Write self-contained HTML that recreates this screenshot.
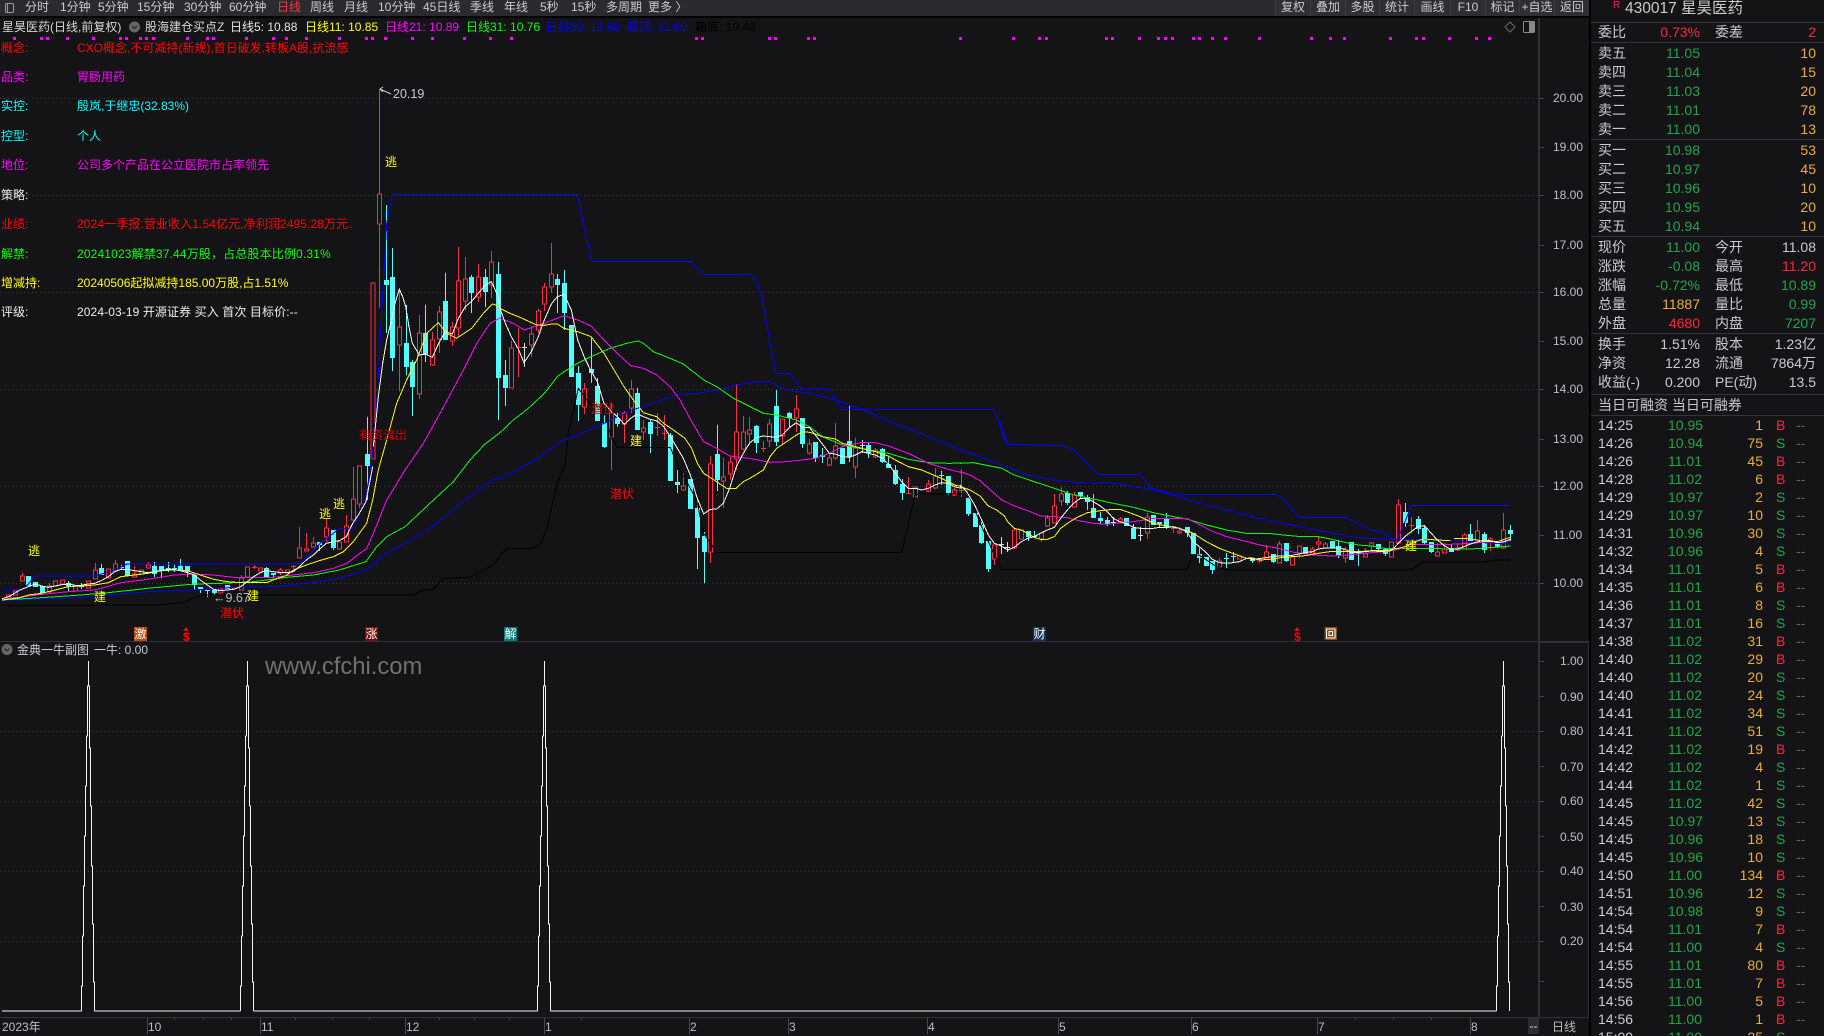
<!DOCTYPE html>
<html lang="zh">
<head>
<meta charset="utf-8">
<title>星昊医药</title>
<style>
html,body{margin:0;padding:0;background:#141416;width:1824px;height:1036px;overflow:hidden}
body{position:relative;font-family:"Liberation Sans","Noto Sans CJK SC",sans-serif;font-size:12px;color:#c8ccd0}
svg.c{position:absolute;left:0;top:0}
svg.c polyline{vector-effect:non-scaling-stroke;fill:none;stroke-width:1;shape-rendering:crispEdges}
.w{stroke:#fff}.y{stroke:#ff0}.m{stroke:#f0f}.g{stroke:#0f0}.b{stroke:#00f}.k{stroke:#000}
.t{position:absolute;white-space:nowrap;line-height:16px;height:16px}
.bar{position:absolute;left:0;top:0;width:1589px;height:16px;background:#2a2b2e;border-bottom:2px solid #000}
.bar .t{top:-1px;color:#c8ccd0}
.btn{position:absolute;top:0;height:16px;background:#2e2f33;border-left:1px solid #3c3d42;text-align:center;line-height:14px;color:#c8ccd0;box-sizing:border-box}
.ax{color:#b8c0c8}
.p{position:absolute;left:1591px;top:0;width:233px;height:1036px;background:#141416;border-left:2px solid #000;box-sizing:border-box;margin-left:-2px}
.ln{position:absolute;left:1591px;width:233px;height:1px;background:#33353c}
.f{font-size:14px;position:absolute;white-space:nowrap;line-height:16px;height:16px}
.l{left:1598px;color:#c8ccd0}.k2{left:1715px;color:#c8ccd0}
.a{right:124px}.v{right:8px}
.gr{color:#1fa54a}.or{color:#e9ad3c}.re{color:#ff2240}.wh{color:#c8ccd0}
.tr{position:absolute;left:1598px;top:416px;width:226px;height:620px;overflow:hidden;font-size:14px;line-height:18px}
.tr div{height:18px;white-space:nowrap}
.tr b,.tr i,.tr u,.tr s,.tr em{display:inline-block;font-weight:normal;font-style:normal;text-decoration:none}
.tr b{width:70px;color:#c8ccd0}.tr i{width:50px;color:#1fa54a}.tr u{width:45px;text-align:right;color:#e9ad3c}
.tr s{width:20px;padding-left:13px;box-sizing:content-box;color:#1fa54a}.tr s.r{color:#ff2240}.tr em{color:#666}
.mk{position:absolute;top:627px;width:13px;height:14px;line-height:14px;text-align:center;color:#fff;font-size:12px;overflow:hidden}
</style>
</head>
<body>
<svg class="c" width="1824" height="1036" viewBox="0 0 1824 1036">
<defs><path id="sp" fill="none" stroke="#f2f2f2" shape-rendering="crispEdges" d="M-7 1011V986H-6V936H-5V886H-4V836H-3V786H-2V736H-1V686H0V661V686H1V748H2V806H3V866H4V924H5V982H6V1011"/></defs>
<!-- grid -->
<path stroke="#3a3a3c" stroke-dasharray="1 3" fill="none" shape-rendering="crispEdges" d="M0 98.5H1539M0 195.5H1539M0 292.5H1539M0 389.5H1539M0 486.5H1539M0 583.5H1539M0 731.5H1539M0 801.5H1539M0 871.5H1539M0 941.5H1539"/>
<!-- magenta squares -->
<path fill="#f0f" d="M13 37h3v3h-3zM40 37h3v3h-3zM46 37h3v3h-3zM66 37h3v3h-3zM92 37h3v3h-3zM119 37h3v3h-3zM125 37h3v3h-3zM139 37h3v3h-3zM145 37h3v3h-3zM152 37h3v3h-3zM186 37h3v3h-3zM206 37h3v3h-3zM212 37h3v3h-3zM245 37h3v3h-3zM272 37h3v3h-3zM285 37h3v3h-3zM305 37h3v3h-3zM338 37h3v3h-3zM365 37h3v3h-3zM371 37h3v3h-3zM384 37h3v3h-3zM411 37h3v3h-3zM431 37h3v3h-3zM463 37h3v3h-3zM489 37h3v3h-3zM510 37h3v3h-3zM695 37h3v3h-3zM701 37h3v3h-3zM768 37h3v3h-3zM774 37h3v3h-3zM807 37h3v3h-3zM813 37h3v3h-3zM959 37h3v3h-3zM1012 37h3v3h-3zM1038 37h3v3h-3zM1045 37h3v3h-3zM1105 37h3v3h-3zM1111 37h3v3h-3zM1138 37h3v3h-3zM1157 37h3v3h-3zM1164 37h3v3h-3zM1171 37h3v3h-3zM1192 37h3v3h-3zM1198 37h3v3h-3zM1211 37h3v3h-3zM1224 37h3v3h-3zM1258 37h3v3h-3zM1310 37h3v3h-3zM1329 37h3v3h-3zM1343 37h3v3h-3zM1389 37h3v3h-3zM1415 37h3v3h-3zM1422 37h3v3h-3zM1448 37h3v3h-3zM1475 37h3v3h-3zM1488 37h3v3h-3z"/>
<!-- cyan wicks -->
<path stroke="#54ffff" fill="none" shape-rendering="crispEdges" d="M68.5 581V591M81.5 583V589M101.5 564V575M121.5 565V570M154.5 562V577M161.5 566V578M168.5 562V572M174.5 565V572M180.5 559V571M187.5 566V577M194.5 575V590M200.5 587V593M207.5 590V597M214.5 590V595M266.5 567V577M273.5 573V578M319.5 542V551M333.5 530V550M367.5 417V500M386.5 205V333M392.5 248V371M406.5 305V375M412.5 360V416M425.5 305V362M445.5 273V340M471.5 275V313M485.5 269V307M498.5 262V420M505.5 360V406M557.5 274V313M564.5 270V330M578.5 366V421M591.5 337V383M597.5 378V421M604.5 415V448M617.5 413V427M637.5 388V430M650.5 420V453M670.5 433V481M677.5 470V493M697.5 497V569M704.5 532V583M717.5 425V491M756.5 425V453M776.5 390V446M789.5 412V428M802.5 418V448M815.5 442V462M822.5 448V463M849.5 406V462M868.5 443V458M882.5 448V463M888.5 457V468M895.5 465V485M902.5 479V500M941.5 471V485M948.5 476V495M968.5 498V516M981.5 522V544M988.5 541V572M1028.5 531V541M1034.5 531V538M1067.5 491V505M1080.5 492V498M1087.5 495V510M1093.5 494V518M1100.5 512V524M1107.5 517V526M1133.5 524V539M1159.5 522V527M1166.5 513V529M1187.5 527V537M1199.5 548V563M1212.5 561V574M1226.5 553V568M1233.5 552V562M1252.5 558V563M1273.5 554V563M1286.5 543V562M1338.5 540V558M1358.5 549V566M1378.5 544V551M1385.5 549V556M1405.5 503V527M1418.5 516V534M1424.5 525V544M1431.5 542V553M1451.5 545V552M1470.5 524V541M1484.5 532V553M1497.5 542V548M1510.5 525V541"/>
<!-- cyan bodies -->
<path fill="#54ffff" shape-rendering="crispEdges" d="M26 576h5V586h-5zM33 582h5V587h-5zM40 586h5V593h-5zM66 583h5V587h-5zM79 586h5v1h-5zM99 568h5V575h-5zM119 567h5v1h-5zM125 561h5V576h-5zM152 566h5V574h-5zM159 566h5V571h-5zM166 568h5v1h-5zM172 568h5v1h-5zM178 566h5V571h-5zM185 566h5V572h-5zM192 575h5V585h-5zM198 587h5V589h-5zM205 590h5V591h-5zM212 590h5V593h-5zM225 585h5V589h-5zM264 568h5V577h-5zM271 573h5V575h-5zM317 542h5V545h-5zM331 530h5V548h-5zM365 454h5V466h-5zM384 280h5V285h-5zM390 277h5V358h-5zM404 343h5V367h-5zM410 362h5V387h-5zM423 333h5V355h-5zM443 301h5V340h-5zM469 277h5V293h-5zM483 277h5V292h-5zM496 274h5V378h-5zM503 375h5V388h-5zM555 279h5V285h-5zM562 283h5V313h-5zM569 325h5V377h-5zM576 373h5V405h-5zM589 369h5V373h-5zM595 386h5V421h-5zM602 423h5V447h-5zM615 418h5V424h-5zM635 393h5V430h-5zM648 422h5V434h-5zM668 435h5V481h-5zM675 482h5V485h-5zM688 479h5V509h-5zM695 508h5V538h-5zM702 536h5V552h-5zM715 454h5V480h-5zM754 426h5V443h-5zM774 406h5V442h-5zM787 413h5V418h-5zM800 418h5V444h-5zM813 442h5V458h-5zM820 455h5V457h-5zM840 448h5V464h-5zM847 441h5V457h-5zM866 445h5V453h-5zM880 449h5V462h-5zM886 464h5V468h-5zM893 470h5V484h-5zM900 484h5V493h-5zM939 475h5v1h-5zM946 476h5V493h-5zM966 498h5V514h-5zM973 513h5V527h-5zM979 525h5V543h-5zM986 541h5V569h-5zM1026 531h5V537h-5zM1032 536h5v1h-5zM1065 493h5V503h-5zM1078 492h5V496h-5zM1085 497h5V502h-5zM1091 508h5V518h-5zM1098 518h5V521h-5zM1105 520h5V524h-5zM1124 518h5V526h-5zM1131 528h5V539h-5zM1151 515h5V525h-5zM1157 522h5V524h-5zM1164 518h5V528h-5zM1185 527h5V533h-5zM1191 533h5V554h-5zM1197 554h5V558h-5zM1204 557h5V566h-5zM1210 561h5V570h-5zM1224 558h5v1h-5zM1231 556h5v1h-5zM1250 558h5V561h-5zM1271 554h5V562h-5zM1284 543h5V561h-5zM1303 547h5V554h-5zM1330 541h5V548h-5zM1336 546h5V555h-5zM1349 542h5V560h-5zM1356 552h5V554h-5zM1376 544h5V549h-5zM1383 549h5V554h-5zM1403 512h5V523h-5zM1416 519h5V529h-5zM1422 528h5V543h-5zM1429 542h5V552h-5zM1449 548h5V552h-5zM1468 534h5V541h-5zM1482 534h5V550h-5zM1495 542h5V547h-5zM1508 530h5V534h-5z"/>
<!-- white dojis -->
<path stroke="#ddd" fill="none" shape-rendering="crispEdges" d="M524.5 343V367M522 347.5h5M862.5 440V453M860 445.5h5M1001.5 537V554M999 544.5h5M1007.5 542V552M1005 547.5h5M1113.5 517V526M1111 522.5h5M1140.5 527V541M1138 535.5h5"/>
<!-- red wicks -->
<path stroke="#ff2d45" fill="none" shape-rendering="crispEdges" d="M22.5 573V581M49.5 583V593M95.5 563V579M115.5 560V571M134.5 566V577M148.5 562V568M232 588.5h5M241.5 575V590M254.5 565V569M252 567.5h5M280.5 568V575M293.5 565V569M291 566.5h5M299.5 527V558M306.5 533V551M313.5 537V547M326.5 519V542M346.5 515V542M353.5 467V520M359.5 466V508M379.5 89V308M399.5 290V391M419.5 315V399M432.5 332V366M439.5 306V353M452.5 322V346M458.5 247V337M465.5 257V310M478.5 264V302M491.5 251V298M511.5 341V388M518.5 328V377M516 347.5h5M531.5 326V357M538.5 309V333M544.5 283V311M551.5 243V293M584.5 383V414M611.5 403V470M624.5 411V443M631.5 380V413M643.5 420V440M657.5 413V436M655 427.5h5M664.5 415V440M662 433.5h5M683.5 473V491M710.5 456V563M723.5 458V508M730.5 457V480M736.5 384V470M743.5 416V450M749.5 417V445M763.5 441V452M761 448.5h5M769.5 419V447M782.5 419V444M796.5 395V432M809.5 439V455M829.5 453V466M835.5 423V460M855.5 438V478M875.5 448V458M908.5 477V494M906 493.5h5M928.5 480V492M935.5 468V489M954.5 488V496M961.5 469V497M959 490.5h5M994.5 545V565M1014.5 528V549M1041.5 533V542M1047.5 515V527M1054.5 494V524M1061.5 487V506M1074.5 492V507M1120.5 517V523M1147.5 513V539M1173.5 526V533M1171 528.5h5M1179.5 527V534M1219.5 558V568M1259.5 559V563M1266.5 545V560M1279.5 541V563M1299.5 546V558M1312.5 547V553M1318.5 537V549M1325.5 542V549M1345.5 547V563M1365.5 548V557M1371.5 542V550M1398.5 499V544M1411.5 517V533M1409 525.5h5M1437.5 543V556M1444.5 543V553M1457.5 543V551M1464.5 533V549M1477.5 520V542M1490.5 537V551M1503.5 513V549"/>
<!-- red bodies -->
<path stroke="#ff2d45" fill="#141416" shape-rendering="crispEdges" d="M6.5 595h4V598h-4zM13.5 591h4V595h-4zM20.5 576h4V581h-4zM47.5 586h4V592h-4zM53.5 581h4V586h-4zM60.5 580h4V584h-4zM73.5 586h4V591h-4zM86.5 581h4V588h-4zM93.5 570h4V579h-4zM106.5 569h4V578h-4zM113.5 564h4V571h-4zM132.5 574h4V577h-4zM139.5 570h4V574h-4zM146.5 565h4V568h-4zM218.5 589h4V593h-4zM239.5 578h4V590h-4zM245.5 567h4V577h-4zM258.5 568h4V571h-4zM278.5 570h4V573h-4zM285.5 570h4V573h-4zM297.5 548h4V558h-4zM304.5 549h4V551h-4zM311.5 543h4V547h-4zM324.5 528h4V537h-4zM337.5 542h4V549h-4zM344.5 526h4V542h-4zM351.5 499h4V520h-4zM357.5 466h4V504h-4zM371 283h4V459h-4zM377.5 194h4V224h-4zM397.5 327h4V345h-4zM417.5 333h4V394h-4zM430.5 340h4V365h-4zM437.5 312h4V339h-4zM450.5 327h4V341h-4zM456.5 281h4V328h-4zM463.5 279h4V301h-4zM476.5 277h4V297h-4zM489.5 262h4V285h-4zM509.5 348h4V388h-4zM529.5 334h4V345h-4zM536.5 311h4V330h-4zM542.5 287h4V304h-4zM549.5 274h4V287h-4zM582.5 389h4V407h-4zM609.5 413h4V437h-4zM622.5 413h4V424h-4zM629.5 389h4V408h-4zM641.5 428h4V432h-4zM681.5 486h4V490h-4zM708.5 464h4V552h-4zM721.5 477h4V481h-4zM728.5 462h4V474h-4zM734.5 432h4V459h-4zM741.5 432h4V449h-4zM747.5 430h4V434h-4zM767.5 424h4V441h-4zM780.5 419h4V436h-4zM794.5 409h4V418h-4zM807.5 444h4V453h-4zM827.5 458h4V465h-4zM833.5 446h4V458h-4zM853.5 448h4V467h-4zM873.5 450h4V457h-4zM913.5 487h4V497h-4zM926.5 484h4V491h-4zM933.5 476h4V488h-4zM952.5 490h4V495h-4zM992.5 545h4V559h-4zM1012.5 530h4V548h-4zM1019.5 530h4V539h-4zM1039.5 533h4V539h-4zM1045.5 518h4V526h-4zM1052.5 506h4V523h-4zM1059.5 494h4V501h-4zM1072.5 495h4V507h-4zM1118.5 519h4V523h-4zM1145.5 517h4V533h-4zM1177.5 531h4V533h-4zM1217.5 561h4V567h-4zM1237.5 556h4V559h-4zM1257.5 559h4V561h-4zM1264.5 552h4V559h-4zM1277.5 544h4V563h-4zM1290.5 557h4V565h-4zM1297.5 546h4V553h-4zM1310.5 549h4V553h-4zM1316.5 542h4V544h-4zM1323.5 544h4V548h-4zM1343.5 550h4V558h-4zM1363.5 554h4V557h-4zM1369.5 543h4V546h-4zM1389.5 542h4V557h-4zM1396.5 505h4V543h-4zM1435.5 552h4V556h-4zM1442.5 549h4V553h-4zM1455.5 548h4V550h-4zM1462.5 535h4V549h-4zM1475.5 531h4V542h-4zM1488.5 539h4V542h-4zM1501.5 530h4V548h-4z"/>
<!-- lines: zone 1 -->
<g transform="translate(0,300) scale(.33333)">
<polyline class="k" points="6,917 470,915 550,908 580,895 610,885 1240,885 1270,870 1300,868 1330,835 1410,832 1480,795 1500,770"/>
<polyline class="b" points="6,902 125,897 243,893 363,882 443,875 583,870 701,862 820,860 940,848 1018,835 1098,810 1160,760 1250,710 1295,680 1360,630 1420,580 1480,540 1500,532"/>
<polyline class="b" points="6,870 70,870 105,828 284,828 345,810 380,792 898,792 960,730 1000,700 1018,685 1060,685 1098,590 1118,460 1130,320"/>
<polyline class="g" points="6,900 125,893 243,885 325,878 443,865 583,852 661,850 761,845 860,832 940,825 1018,810 1098,785 1130,740 1160,710 1215,680 1295,605 1360,545 1410,480 1455,432 1500,398"/>
<polyline class="m" points="6,895 60,892 125,883 205,875 284,870 363,848 443,838 522,825 583,822 641,825 701,832 761,832 820,832 880,825 940,818 1000,805 1040,790 1100,745 1120,700 1160,600 1215,510 1270,430 1320,340 1390,210 1430,130 1470,70 1500,54"/>
<polyline class="y" points="6,900 60,893 85,885 125,880 166,870 205,860 243,858 284,855 325,848 363,830 403,825 443,820 484,812 522,810 562,812 601,825 641,838 682,845 722,848 761,848 799,848 820,840 860,826 880,810 919,795 958,782 1000,770 1030,755 1060,725 1100,670 1118,600 1135,510 1160,420 1190,310 1220,240 1250,180 1280,100 1315,68 1340,100 1370,115 1415,85 1450,40 1478,12 1500,20"/>
<polyline class="w" points="6,897 30,888 60,870 85,860 106,852 125,858 146,862 166,858 185,854 205,852 226,856 243,856 265,852 284,850 304,842 325,830 344,815 363,808 382,808 403,812 424,815 443,818 463,815 484,812 503,808 522,808 541,812 562,818 583,825 601,840 622,855 641,868 661,872 682,870 701,868 722,860 742,845 761,830 781,818 799,812 820,815 841,818 860,818 880,815 898,800 919,780 940,765 958,748 979,730 1000,725 1018,722 1039,710 1058,670 1078,640 1098,605 1118,500"/>
</g>
<g transform="translate(340,80) scale(.33333)">
<polyline class="b" points="100,1100 110,980 125,700 135,520 140,430 157,343 712,343 740,480"/>
<polyline class="w" points="100,1100 115,950 128,850 140,780 155,720 165,670 178,628 188,650 197,680 207,740 217,790 238,825 256,822 277,832 296,790 316,755 337,762 355,715 376,680 394,665 415,640 436,615 454,605 475,650 480,685"/>
</g>
<g transform="translate(500,240) scale(.33333)">
<polyline class="k" points="0,945 25,925 100,925 120,912 140,870 155,800 172,730 195,675 205,580 225,490 235,445 268,490 310,505 333,590 352,622 511,622 535,680 590,780 611,880 650,937 1205,937 1246,762 1405,762 1445,860 1503,988 1560,988"/>
<polyline class="b" points="262,0 275,65 572,65 611,103 750,103 770,120 785,170 800,250 812,320 829,400 868,400 905,447 988,447 1027,508 1482,508 1520,612 1560,612"/>
<polyline class="b" points="0,718 60,685 115,655 180,605 233,585 292,560 352,530 412,505 470,485 530,465 590,460 650,452 710,435 760,427 808,425 860,450 928,460 1006,480 1090,510 1186,552 1285,590 1385,630"/>
<polyline class="g" points="0,578 40,540 85,505 133,460 172,410 192,395 233,370 273,350 330,325 380,310 415,303 430,310 460,335 510,355 550,372 611,420 650,440 700,475 750,500 790,520 829,525 889,540 928,560 967,590 1027,615 1105,630 1165,640 1225,658 1285,668 1345,670 1385,669"/>
<polyline class="m" points="0,235 40,250 72,270 133,250 192,227 233,240 273,258 312,300 352,340 392,377 430,385 470,405 510,440 540,480 575,545 611,605 650,625 689,648 748,655 808,667 860,665 907,660 946,655 988,640 1027,620 1086,607 1126,608 1165,618 1225,640 1285,670 1345,688 1385,698"/>
<polyline class="y" points="0,205 30,220 60,232 110,255 133,256 154,252 172,252 192,265 233,275 273,290 312,340 345,395 372,440 400,480 430,518 470,530 491,550 530,577 555,595 575,625 592,670 611,700 650,725 680,745 708,745 730,725 755,712 790,690 810,650 830,625 860,605 889,585 907,575 928,577 946,582 967,590 1006,597 1027,610 1048,615 1086,625 1126,635 1165,648 1186,660 1225,680 1265,690 1324,715 1364,735 1385,740"/>
<polyline class="w" points="0,205 16,250 34,290 54,325 72,368 94,335 115,290 133,240 154,192 172,170 192,163 214,210 233,300 253,352 274,395 292,425 312,490 332,512 352,530 373,553 392,535 412,522 430,530 451,538 472,543 491,560 511,590 532,625 550,655 571,705 590,770 611,822 631,808 650,807 670,790 689,745 709,680 730,640 748,610 769,593 790,588 808,590 829,592 847,585 868,563 889,548 907,562 928,562 946,585 967,612 988,640 1006,642 1027,650 1048,652 1066,645 1086,635 1105,640 1126,645 1147,655 1165,672 1186,700 1205,725 1225,745 1246,745 1265,750 1285,745 1305,735 1324,728 1345,730 1363,740 1384,745"/>
</g>
<g transform="translate(960,420) scale(.33333)">
<polyline class="b" points="118,0 143,73 170,73 305,77 340,90 380,130 415,163 540,163 575,205 640,223 900,223"/>
<polyline class="b" points="0,90 60,110 125,135 203,165 283,180 341,187 400,190 442,187 500,197 580,210 640,225 720,250 800,270 880,290"/>
<polyline class="g" points="0,130 40,128 125,145 163,165 222,185 283,205 341,225 400,237 460,250 520,262 580,278 640,290 680,297 740,315 800,330 860,340 880,340"/>
<polyline class="m" points="0,155 30,165 60,182 85,205 125,240 163,258 203,272 241,288 280,290 322,293 361,303 400,310 442,313 480,308 520,305 580,295 640,295 680,295 720,315 760,335 800,350 860,365 880,369"/>
<polyline class="y" points="0,200 30,210 60,228 85,258 110,270 133,288 143,305 163,325 184,330 203,340 222,352 241,358 262,358 283,350 302,325 322,310 350,293 382,278 421,272 460,268 480,268 500,275 540,290 580,310 619,318 658,325 700,340 739,365 778,385 818,400 860,415 880,417"/>
<polyline class="w" points="0,195 20,215 44,255 65,300 85,345 103,370 124,378 143,390 163,382 184,365 203,355 222,350 241,340 262,330 283,322 302,295 322,270 341,250 361,235 382,235 400,245 421,258 442,275 460,295 479,305 498,310 520,322 540,325 560,325 580,325 598,322 619,322 639,320 658,325 680,335 700,365 718,380 739,398 757,418 778,428 799,430 818,428 838,425 860,415 880,414"/>
</g>
<polyline class="k" points="1020,569.5 1187,569.5 1193,556 1199,555 1214,565 1226,570 1411,570 1423,562 1482,562 1495,560 1510,560"/>
<g transform="translate(1250,480) scale(.33333)">
<polyline class="b" points="0,43 75,43 100,55 145,112 285,112 320,130 360,150 395,155 425,175 440,180 455,150 484,77 780,77"/>
<polyline class="b" points="0,110 100,130 200,150 300,170 400,178 530,178 620,183 700,188 781,192"/>
<polyline class="g" points="0,160 55,160 100,165 155,170 205,170 245,178 285,187 325,195 364,198 404,205 445,205 523,205 602,207 661,207 721,203 781,198"/>
<polyline class="m" points="0,188 40,197 85,205 127,216 166,222 205,226 245,228 285,226 325,222 364,218 404,215 445,208 484,195 523,193 602,193 661,190 721,185 781,182"/>
<polyline class="y" points="0,233 30,240 60,238 100,232 127,230 166,227 205,220 245,214 285,214 325,215 364,212 404,212 445,205 464,200 484,190 503,182 523,177 560,180 602,182"/>
<polyline class="y" points="612,175 650,176 682,180 700,185 742,185 781,172"/>
<polyline class="w" points="0,238 28,236 47,233 67,230 88,228 107,228 127,226 146,222 166,218 187,215 205,207 226,204 245,204 265,204 286,208 304,218 325,217 344,215 364,213 385,214 404,214 424,212 445,190 464,170 484,155 503,140 523,137 544,160 562,180 583,197 602,208 622,207 642,200 661,192 682,186 703,180 721,182 742,188 760,186 781,178"/>
</g>
<!-- high arrow -->
<path d="M380 89l11 5M380 89l3-2M380 89l3 3" stroke="#ccc" fill="none"/>
<!-- separators -->
<path stroke="#2f3138" fill="none" shape-rendering="crispEdges" d="M0 641.5H1539M0 1017.5H1589"/>
<path stroke="#2f3138" stroke-width="2" fill="none" shape-rendering="crispEdges" d="M1539 18V1018M1539 642H1589V1018"/>
<!-- axis ticks -->
<path stroke="#444850" fill="none" shape-rendering="crispEdges" d="M1540 98.5h4M1540 147.5h4M1540 195.5h4M1540 245.5h4M1540 292.5h4M1540 341.5h4M1540 389.5h4M1540 439.5h4M1540 486.5h4M1540 535.5h4M1540 583.5h4M1540 661.5h4M1540 696.5h4M1540 731.5h4M1540 766.5h4M1540 801.5h4M1540 836.5h4M1540 871.5h4M1540 906.5h4M1540 941.5h4M1540 981.5h4M147.5 1018v16M260.5 1018v16M405.5 1018v16M544.5 1018v16M689.5 1018v16M788.5 1018v16M927.5 1018v16M1058.5 1018v16M1191.5 1018v16M1317.5 1018v16M1470.5 1018v16M174.5 1018v2M203.5 1018v2M231.5 1018v2M295.5 1018v2M332.5 1018v2M369.5 1018v2M439.5 1018v2M474.5 1018v2M509.5 1018v2M581.5 1018v2M1355.5 1018v2M1393.5 1018v2M1431.5 1018v2"/>
<!-- sub chart -->
<path fill="none" stroke="#f2f2f2" shape-rendering="crispEdges" d="M2 1011H81.5M94.5 1011H240.5M253.5 1011H537.5M550.5 1011H1496.5"/>
<use href="#sp" x="88.5"/><use href="#sp" x="247.5"/><use href="#sp" x="544.5"/><use href="#sp" x="1503.5"/>
<!-- misc icons -->
<circle cx="134.5" cy="27" r="5.5" fill="#666"/><path d="M132 26l2.5 2.5 2.5-2.5" stroke="#222" fill="none"/>
<circle cx="7" cy="649.5" r="5.5" fill="#666"/><path d="M4.5 648.5l2.5 2.5 2.5-2.5" stroke="#222" fill="none"/>
<path d="M1510 22l5 5-5 5-5-5z" fill="none" stroke="#6c6c6c"/>
<rect x="1523.5" y="21.5" width="11" height="11" rx="1" fill="none" stroke="#888"/><rect x="1529" y="22" width="5" height="10" fill="#888"/>
<!-- $ marks -->
<path d="M186 627l3 4h-6zM1297 627l3 4h-6z" fill="#f00"/>
<!-- rect icon -->
<rect x="1324.5" y="627" width="12.5" height="13" fill="#8a4a10"/><rect x="1326.5" y="629" width="8.5" height="9" fill="none" stroke="#fff"/><rect x="1329" y="631.5" width="3.5" height="4" fill="none" stroke="#fff"/>
</svg>

<div class="bar">
<svg width="16" height="16" style="position:absolute;left:2px;top:0"><rect x="3.5" y="3.5" width="8" height="9" rx="1" fill="none" stroke="#999"/><path d="M5.5 4v8" stroke="#999"/></svg>
<span class="t" style="left:25px">分时</span><span class="t" style="left:60px">1分钟</span><span class="t" style="left:98px">5分钟</span><span class="t" style="left:137px">15分钟</span><span class="t" style="left:184px">30分钟</span><span class="t" style="left:229px">60分钟</span><span class="t" style="left:277px;color:#ff3344">日线</span><span class="t" style="left:310px">周线</span><span class="t" style="left:344px">月线</span><span class="t" style="left:378px">10分钟</span><span class="t" style="left:423px">45日线</span><span class="t" style="left:470px">季线</span><span class="t" style="left:504px">年线</span><span class="t" style="left:540px">5秒</span><span class="t" style="left:571px">15秒</span><span class="t" style="left:606px">多周期</span><span class="t" style="left:648px">更多 〉</span>
<span class="btn" style="left:1275px;width:35px">复权</span><span class="btn" style="left:1310px;width:35px">叠加</span><span class="btn" style="left:1345px;width:34px">多股</span><span class="btn" style="left:1379px;width:35px">统计</span><span class="btn" style="left:1414px;width:36px">画线</span><span class="btn" style="left:1450px;width:35px">F10</span><span class="btn" style="left:1485px;width:34px">标记</span><span class="btn" style="left:1519px;width:35px">+自选</span><span class="btn" style="left:1554px;width:35px">返回</span>
</div>

<span class="t" style="left:2px;top:19px;color:#d8d8d8">星昊医药(日线,前复权)</span>
<span class="t" style="left:145px;top:19px;color:#d8d8d8">股海建仓买点Z</span>
<span class="t" style="left:230px;top:19px;color:#e8e8e8">日线5: 10.88</span>
<span class="t" style="left:305px;top:19px;color:#ff0">日线11: 10.85</span>
<span class="t" style="left:385px;top:19px;color:#f0f">日线21: 10.89</span>
<span class="t" style="left:466px;top:19px;color:#0f0">日线31: 10.76</span>
<span class="t" style="left:546px;top:19px;color:#00f">日线60: 10.80</span>
<span class="t" style="left:627px;top:19px;color:#00f">箱顶: 11.60</span>
<span class="t" style="left:695px;top:19px;color:#000">箱底: 10.46</span>

<span class="t" style="left:1px;top:40px;color:#f00">概念:</span><span class="t" style="left:77px;top:40px;color:#f00">CXO概念,不可减持(新规),首日破发,转板A股,抗流感</span>
<span class="t" style="left:1px;top:69px;color:#f0f">品类:</span><span class="t" style="left:77px;top:69px;color:#f0f">胃肠用药</span>
<span class="t" style="left:1px;top:98px;color:#0ff">实控:</span><span class="t" style="left:77px;top:98px;color:#0ff">殷岚,于继忠(32.83%)</span>
<span class="t" style="left:1px;top:128px;color:#0ff">控型:</span><span class="t" style="left:77px;top:128px;color:#0ff">个人</span>
<span class="t" style="left:1px;top:157px;color:#f0f">地位:</span><span class="t" style="left:77px;top:157px;color:#f0f">公司多个产品在公立医院市占率领先</span>
<span class="t" style="left:1px;top:187px;color:#eee">策略:</span>
<span class="t" style="left:1px;top:216px;color:#f00">业绩:</span><span class="t" style="left:77px;top:216px;color:#f00;letter-spacing:.1px">2024一季报:营业收入1.54亿元,净利润2495.28万元.</span>
<span class="t" style="left:1px;top:246px;color:#0f0">解禁:</span><span class="t" style="left:77px;top:246px;color:#0f0;letter-spacing:.15px">20241023解禁37.44万股，占总股本比例0.31%</span>
<span class="t" style="left:1px;top:275px;color:#ff0">增减持:</span><span class="t" style="left:77px;top:275px;color:#ff0">20240506起拟减持185.00万股,占1.51%</span>
<span class="t" style="left:1px;top:304px;color:#eee">评级:</span><span class="t" style="left:77px;top:304px;color:#eee;letter-spacing:.1px">2024-03-19 开源证券 买入 首次 目标价:--</span>

<span class="t" style="left:393px;top:86px;color:#c8ccd0;font-size:12.5px">20.19</span>
<span class="t" style="left:385px;top:154px;color:#ff0">逃</span>
<span class="t" style="left:28px;top:543px;color:#ff0">逃</span>
<span class="t" style="left:319px;top:506px;color:#ff0">逃</span>
<span class="t" style="left:333px;top:496px;color:#ff0">逃</span>
<span class="t" style="left:94px;top:589px;color:#ff0">建</span>
<span class="t" style="left:247px;top:588px;color:#ff0">建</span>
<span class="t" style="left:630px;top:433px;color:#ff0">建</span>
<span class="t" style="left:1405px;top:538px;color:#ff0">建</span>
<span class="t" style="left:220px;top:605px;color:#f00">潜伏</span>
<span class="t" style="left:610px;top:486px;color:#f00">潜伏</span>
<span class="t" style="left:591px;top:401px;color:#d00">潜伏</span>
<span class="t" style="left:359px;top:427px;color:#c00">有资流出</span>
<span class="t" style="left:213px;top:590px;color:#bbb;font-size:12.5px">←9.67</span>

<div class="mk" style="left:134px;background:#b84a10">激</div>
<div class="mk" style="left:365px;background:#7a0a0a">涨</div>
<div class="mk" style="left:504px;background:#087a78">解</div>
<div class="mk" style="left:1033px;background:#10355c">财</div>
<span class="t" style="left:183px;top:629px;color:#f00;font-weight:bold;font-size:12px">$</span>
<span class="t" style="left:1294px;top:629px;color:#f00;font-weight:bold;font-size:12px">$</span>

<span class="t" style="left:17px;top:642px;color:#c8ccd0">金典一牛副图</span>
<span class="t" style="left:94px;top:642px;color:#c8ccd0">一牛: 0.00</span>
<span class="t" style="left:265px;top:654px;height:26px;line-height:26px;font-size:23.8px;color:#707070">www.cfchi.com</span>

<!-- axis labels -->
<span class="t ax" style="left:1553px;top:90px">20.00</span><span class="t ax" style="left:1553px;top:139px">19.00</span><span class="t ax" style="left:1553px;top:187px">18.00</span><span class="t ax" style="left:1553px;top:237px">17.00</span><span class="t ax" style="left:1553px;top:284px">16.00</span><span class="t ax" style="left:1553px;top:333px">15.00</span><span class="t ax" style="left:1553px;top:381px">14.00</span><span class="t ax" style="left:1553px;top:431px">13.00</span><span class="t ax" style="left:1553px;top:478px">12.00</span><span class="t ax" style="left:1553px;top:527px">11.00</span><span class="t ax" style="left:1553px;top:575px">10.00</span>
<span class="t ax" style="left:1560px;top:653px">1.00</span><span class="t ax" style="left:1560px;top:689px">0.90</span><span class="t ax" style="left:1560px;top:723px">0.80</span><span class="t ax" style="left:1560px;top:759px">0.70</span><span class="t ax" style="left:1560px;top:793px">0.60</span><span class="t ax" style="left:1560px;top:829px">0.50</span><span class="t ax" style="left:1560px;top:863px">0.40</span><span class="t ax" style="left:1560px;top:899px">0.30</span><span class="t ax" style="left:1560px;top:933px">0.20</span>
<span class="t ax" style="left:2px;top:1019px">2023年</span><span class="t ax" style="left:148px;top:1019px">10</span><span class="t ax" style="left:261px;top:1019px">11</span><span class="t ax" style="left:406px;top:1019px">12</span><span class="t ax" style="left:545px;top:1019px">1</span><span class="t ax" style="left:690px;top:1019px">2</span><span class="t ax" style="left:789px;top:1019px">3</span><span class="t ax" style="left:928px;top:1019px">4</span><span class="t ax" style="left:1059px;top:1019px">5</span><span class="t ax" style="left:1192px;top:1019px">6</span><span class="t ax" style="left:1318px;top:1019px">7</span><span class="t ax" style="left:1471px;top:1019px">8</span>
<span class="t" style="left:1528px;top:1018px;width:11px;height:16px;background:#2c2e36;text-align:center;color:#ddd">--</span>
<span class="t" style="left:1552px;top:1019px;color:#bbb">日线</span>

<!-- right panel -->
<div class="p"></div>
<span class="t" style="left:1613px;top:-2px;color:#ff2240;font-size:10px">R</span>
<span class="t" style="left:1625px;top:1px;font-size:15.5px;color:#ccc">430017 星昊医药</span>
<div class="ln" style="top:22px"></div><div class="ln" style="top:42px"></div><div class="ln" style="top:139px"></div><div class="ln" style="top:236px"></div><div class="ln" style="top:333px"></div><div class="ln" style="top:394px"></div><div class="ln" style="top:415px"></div>

<span class="f l" style="top:24px">委比</span><span class="f a re" style="top:24px">0.73%</span><span class="f k2" style="top:24px">委差</span><span class="f v re" style="top:24px">2</span>

<span class="f l" style="top:45px">卖五</span><span class="f a gr" style="top:45px">11.05</span><span class="f v or" style="top:45px">10</span>
<span class="f l" style="top:64px">卖四</span><span class="f a gr" style="top:64px">11.04</span><span class="f v or" style="top:64px">15</span>
<span class="f l" style="top:83px">卖三</span><span class="f a gr" style="top:83px">11.03</span><span class="f v or" style="top:83px">20</span>
<span class="f l" style="top:102px">卖二</span><span class="f a gr" style="top:102px">11.01</span><span class="f v or" style="top:102px">78</span>
<span class="f l" style="top:121px">卖一</span><span class="f a gr" style="top:121px">11.00</span><span class="f v or" style="top:121px">13</span>

<span class="f l" style="top:142px">买一</span><span class="f a gr" style="top:142px">10.98</span><span class="f v or" style="top:142px">53</span>
<span class="f l" style="top:161px">买二</span><span class="f a gr" style="top:161px">10.97</span><span class="f v or" style="top:161px">45</span>
<span class="f l" style="top:180px">买三</span><span class="f a gr" style="top:180px">10.96</span><span class="f v or" style="top:180px">10</span>
<span class="f l" style="top:199px">买四</span><span class="f a gr" style="top:199px">10.95</span><span class="f v or" style="top:199px">20</span>
<span class="f l" style="top:218px">买五</span><span class="f a gr" style="top:218px">10.94</span><span class="f v or" style="top:218px">10</span>

<span class="f l" style="top:239px">现价</span><span class="f a gr" style="top:239px">11.00</span><span class="f k2" style="top:239px">今开</span><span class="f v wh" style="top:239px">11.08</span>
<span class="f l" style="top:258px">涨跌</span><span class="f a gr" style="top:258px">-0.08</span><span class="f k2" style="top:258px">最高</span><span class="f v re" style="top:258px">11.20</span>
<span class="f l" style="top:277px">涨幅</span><span class="f a gr" style="top:277px">-0.72%</span><span class="f k2" style="top:277px">最低</span><span class="f v gr" style="top:277px">10.89</span>
<span class="f l" style="top:296px">总量</span><span class="f a or" style="top:296px">11887</span><span class="f k2" style="top:296px">量比</span><span class="f v gr" style="top:296px">0.99</span>
<span class="f l" style="top:315px">外盘</span><span class="f a re" style="top:315px">4680</span><span class="f k2" style="top:315px">内盘</span><span class="f v gr" style="top:315px">7207</span>

<span class="f l" style="top:336px">换手</span><span class="f a wh" style="top:336px">1.51%</span><span class="f k2" style="top:336px">股本</span><span class="f v wh" style="top:336px">1.23亿</span>
<span class="f l" style="top:355px">净资</span><span class="f a wh" style="top:355px">12.28</span><span class="f k2" style="top:355px">流通</span><span class="f v wh" style="top:355px">7864万</span>
<span class="f l" style="top:374px">收益(-)</span><span class="f a wh" style="top:374px">0.200</span><span class="f k2" style="top:374px">PE(动)</span><span class="f v wh" style="top:374px">13.5</span>

<span class="f l" style="top:397px">当日可融资 当日可融券</span>

<div class="tr">
<div><b>14:25</b><i>10.95</i><u>1</u><s class="r">B</s><em>--</em></div>
<div><b>14:26</b><i>10.94</i><u>75</u><s>S</s><em>--</em></div>
<div><b>14:26</b><i>11.01</i><u>45</u><s class="r">B</s><em>--</em></div>
<div><b>14:28</b><i>11.02</i><u>6</u><s class="r">B</s><em>--</em></div>
<div><b>14:29</b><i>10.97</i><u>2</u><s>S</s><em>--</em></div>
<div><b>14:29</b><i>10.97</i><u>10</u><s>S</s><em>--</em></div>
<div><b>14:31</b><i>10.96</i><u>30</u><s>S</s><em>--</em></div>
<div><b>14:32</b><i>10.96</i><u>4</u><s>S</s><em>--</em></div>
<div><b>14:34</b><i>11.01</i><u>5</u><s class="r">B</s><em>--</em></div>
<div><b>14:35</b><i>11.01</i><u>6</u><s class="r">B</s><em>--</em></div>
<div><b>14:36</b><i>11.01</i><u>8</u><s>S</s><em>--</em></div>
<div><b>14:37</b><i>11.01</i><u>16</u><s>S</s><em>--</em></div>
<div><b>14:38</b><i>11.02</i><u>31</u><s class="r">B</s><em>--</em></div>
<div><b>14:40</b><i>11.02</i><u>29</u><s class="r">B</s><em>--</em></div>
<div><b>14:40</b><i>11.02</i><u>20</u><s>S</s><em>--</em></div>
<div><b>14:40</b><i>11.02</i><u>24</u><s>S</s><em>--</em></div>
<div><b>14:41</b><i>11.02</i><u>34</u><s>S</s><em>--</em></div>
<div><b>14:41</b><i>11.02</i><u>51</u><s>S</s><em>--</em></div>
<div><b>14:42</b><i>11.02</i><u>19</u><s class="r">B</s><em>--</em></div>
<div><b>14:42</b><i>11.02</i><u>4</u><s>S</s><em>--</em></div>
<div><b>14:44</b><i>11.02</i><u>1</u><s>S</s><em>--</em></div>
<div><b>14:45</b><i>11.02</i><u>42</u><s>S</s><em>--</em></div>
<div><b>14:45</b><i>10.97</i><u>13</u><s>S</s><em>--</em></div>
<div><b>14:45</b><i>10.96</i><u>18</u><s>S</s><em>--</em></div>
<div><b>14:45</b><i>10.96</i><u>10</u><s>S</s><em>--</em></div>
<div><b>14:50</b><i>11.00</i><u>134</u><s class="r">B</s><em>--</em></div>
<div><b>14:51</b><i>10.96</i><u>12</u><s>S</s><em>--</em></div>
<div><b>14:54</b><i>10.98</i><u>9</u><s>S</s><em>--</em></div>
<div><b>14:54</b><i>11.01</i><u>7</u><s class="r">B</s><em>--</em></div>
<div><b>14:54</b><i>11.00</i><u>4</u><s>S</s><em>--</em></div>
<div><b>14:55</b><i>11.01</i><u>80</u><s class="r">B</s><em>--</em></div>
<div><b>14:55</b><i>11.01</i><u>7</u><s class="r">B</s><em>--</em></div>
<div><b>14:56</b><i>11.00</i><u>5</u><s class="r">B</s><em>--</em></div>
<div><b>14:56</b><i>11.00</i><u>1</u><s class="r">B</s><em>--</em></div>
<div><b>15:00</b><i>11.00</i><u>25</u><s>S</s><em>--</em></div>
</div>
</body>
</html>
